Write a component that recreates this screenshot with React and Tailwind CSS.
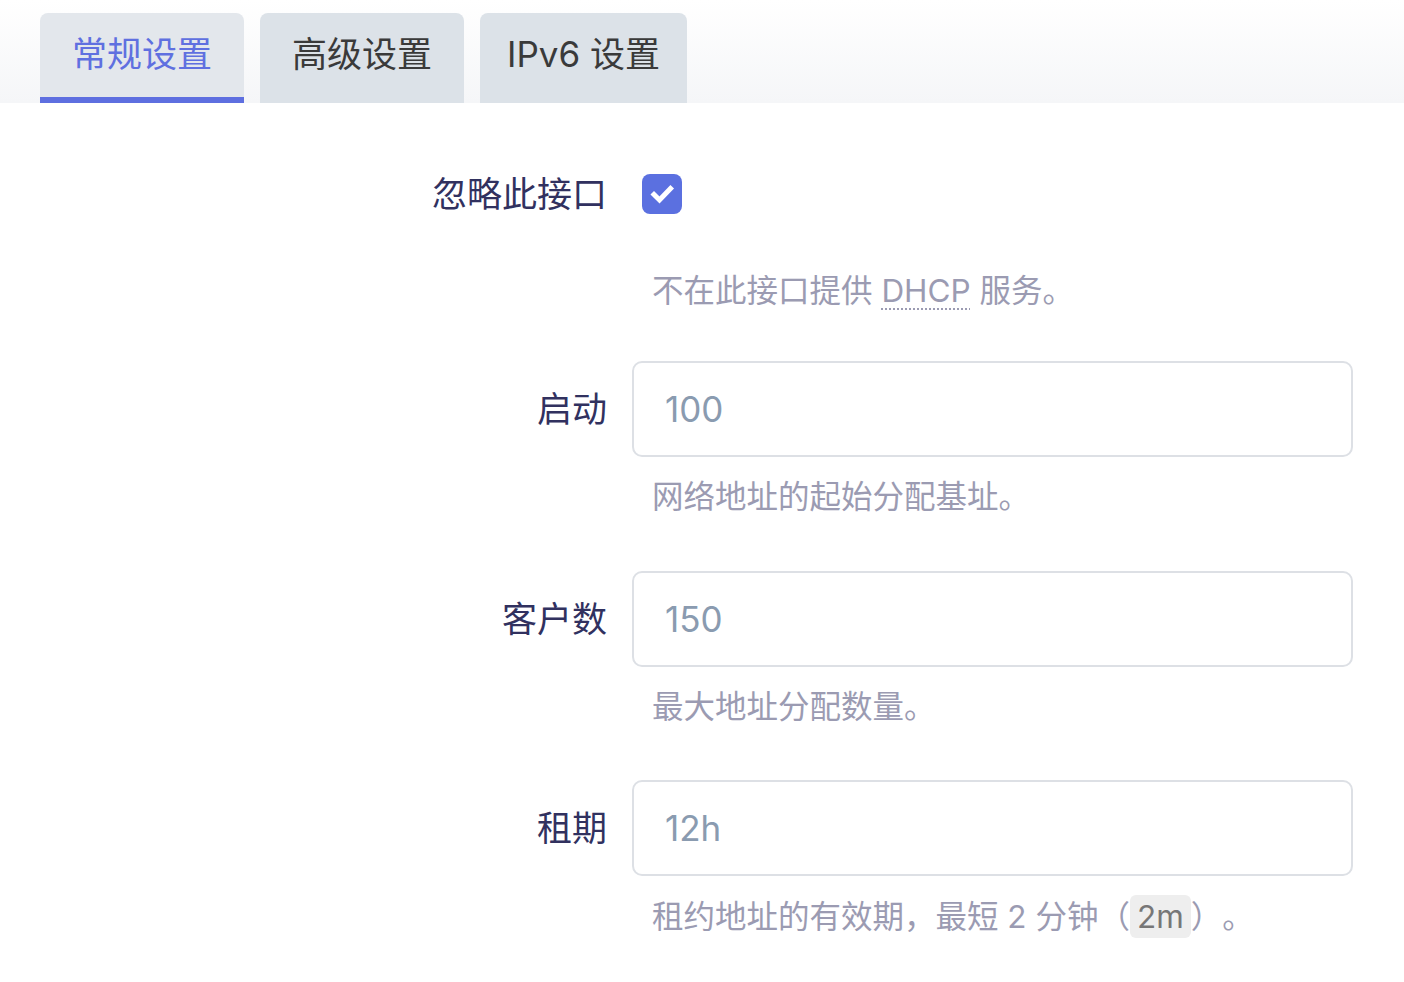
import React from "react";

const font = { fontFamily: '"Inter", "Noto Sans CJK SC", sans-serif' };

function Tab({ children, active, className = "px-8" }) {
  return (
    <div
      className={
        "h-[90px] rounded-t-[8px] flex items-center justify-center text-[35px] leading-none border-b-[6px] " +
        className +
        " " +
        (active
          ? "bg-[#e3e7ec] text-[#5f70e0] border-[#5e6fe0]"
          : "bg-[#dce2e8] text-[#3a3a3a] border-[#dce2e8]")
      }
    >
      <span className="-mt-[2px]">{children}</span>
    </div>
  );
}

function Label({ children }) {
  return (
    <div className="w-[607px] shrink-0 text-right text-[35px] text-[#31315f] leading-none">
      {children}
    </div>
  );
}

function Desc({ children, className = "" }) {
  return (
    <div className={"pl-[652px] text-[31.5px] leading-[48px] text-[#9b9bb2] [text-spacing-trim:space-all] " + className}>
      {children}
    </div>
  );
}

function InputRow({ label, value }) {
  return (
    <div className="flex items-center">
      <Label>{label}</Label>
      <div className="ml-[25px] w-[721px] h-[96px] border-2 border-[#dde0e5] rounded-[10px] flex items-center pl-[31px] text-[35px] text-[#8a9bb0]">
        {value}
      </div>
    </div>
  );
}

export default function App() {
  return (
    <div className="w-[1404px] h-[982px] bg-white" style={font}>
      <div className="h-[103px] bg-gradient-to-b from-white to-[#f5f6f8] flex items-end gap-4 pl-10">
        <Tab active>常规设置</Tab>
        <Tab>高级设置</Tab>
        <Tab className="px-[27px]">IPv6 设置</Tab>
      </div>

      <div className="flex items-center mt-[70px] h-[42px]">
        <Label>忽略此接口</Label>
        <div className="ml-[35px] w-10 h-10 rounded-[8px] bg-[#5b70e0] flex items-center justify-center">
          <svg width="26" height="26" viewBox="0 0 26 26">
            <path d="M5 13.5 L10.5 19 L21.5 7.5" fill="none" stroke="white" strokeWidth="5" strokeLinecap="square" strokeLinejoin="miter" />
          </svg>
        </div>
      </div>
      <Desc className="mt-[52px]">
        不在此接口提供{" "}
        <span className="underline decoration-dotted decoration-2 underline-offset-[6px]">DHCP</span>{" "}
        服务。
      </Desc>

      <div className="mt-[46px]">
        <InputRow label="启动" value="100" />
      </div>
      <Desc className="mt-[16px]">网络地址的起始分配基址。</Desc>

      <div className="mt-[50px]">
        <InputRow label="客户数" value="150" />
      </div>
      <Desc className="mt-[16px]">最大地址分配数量。</Desc>

      <div className="mt-[49px]">
        <InputRow label="租期" value="12h" />
      </div>
      <Desc className="mt-[17px]">
        租约地址的有效期，最短 2 分钟（
        <span className="bg-[#eeeeee] text-[#777777] rounded-[6px] px-[7px] py-[2px]">2m</span>
        ）。
      </Desc>
    </div>
  );
}
